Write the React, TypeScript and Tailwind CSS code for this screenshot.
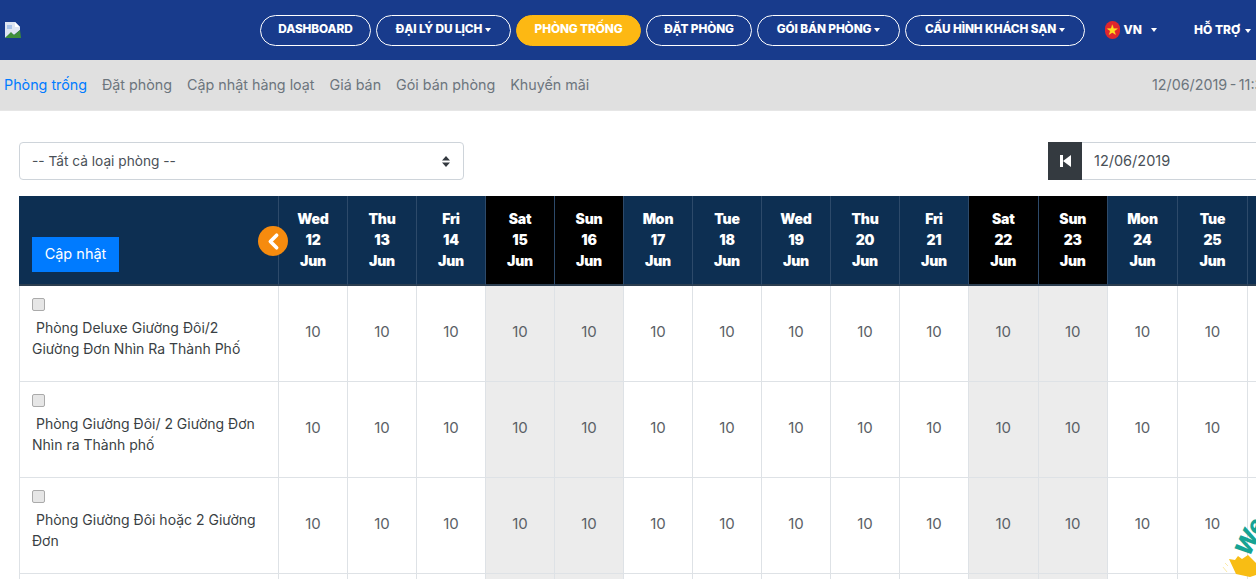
import { ChevronLeft } from "lucide-react";

const days = [
  ["Wed", "12"], ["Thu", "13"], ["Fri", "14"], ["Sat", "15"], ["Sun", "16"],
  ["Mon", "17"], ["Tue", "18"], ["Wed", "19"], ["Thu", "20"], ["Fri", "21"],
  ["Sat", "22"], ["Sun", "23"], ["Mon", "24"], ["Tue", "25"], ["Wed", "26"],
];

const rooms = [
  "Phòng Deluxe Giường Đôi/2 Giường Đơn Nhìn Ra Thành Phố",
  "Phòng Giường Đôi/ 2 Giường Đơn Nhìn ra Thành phố",
  "Phòng Giường Đôi hoặc 2 Giường Đơn",
  "",
];

const navItems = [
  { label: "DASHBOARD", width: "w-[111px]" },
  { label: "ĐẠI LÝ DU LỊCH", width: "w-[135px]", caret: true },
  { label: "PHÒNG TRỐNG", width: "w-[125px]", active: true },
  { label: "ĐẶT PHÒNG", width: "w-[106px]" },
  { label: "GÓI BÁN PHÒNG", width: "w-[143px]", caret: true },
  { label: "CẤU HÌNH KHÁCH SẠN", width: "w-[180px]", caret: true },
];

const subNav = ["Đặt phòng", "Cập nhật hàng loạt", "Giá bán", "Gói bán phòng", "Khuyến mãi"];

function Caret({ className = "" }: { className?: string }) {
  return <span className={`ml-[3px] inline-block border-x-[3.5px] border-t-[4px] border-x-transparent border-t-white align-middle ${className}`} />;
}

function BrokenImage() {
  return (
    <svg width="16" height="16" viewBox="0 0 16 16" className="shrink-0">
      <path d="M0 0h10l5 5v3L9 13l-3-2-6 5z" fill="#dfe6f2" />
      <path d="M10 0l5 5h-5z" fill="#fff" />
      <path d="M0 16l6-6 3 3 6-5 1 8z" fill="#3f8f3a" />
      <path d="M2 3h5v4H2z" fill="#a9c3e8" />
    </svg>
  );
}

function Flag() {
  return (
    <span className="flex size-[18px] items-center justify-center rounded-full bg-[#e0262c] text-[13px] leading-none text-[#ffdd1f]">
      ★
    </span>
  );
}

export default function App() {
  return (
    <div className="relative h-[579px] w-[1256px] overflow-hidden bg-white font-['Inter',sans-serif] text-[#212529]">
      <header className="flex h-[60px] items-center bg-[#183b8c] pl-[5px]">
        <BrokenImage />
        <nav className="ml-[239px] flex gap-[5px]">
          {navItems.map((item) => (
            <a
              key={item.label}
              className={`flex h-[31px] items-center justify-center whitespace-nowrap rounded-full border text-[11.8px] font-extrabold tracking-[-0.1px] text-white ${item.width} ${
                item.active ? "border-[#fdb813] bg-[#fdb813]" : "border-white"
              }`}
            >
              {item.label}
              {item.caret && <Caret />}
            </a>
          ))}
        </nav>
        <div className="ml-[20px] flex w-[52px] items-center gap-[4px] text-[12px] font-extrabold text-white">
          <Flag />
          VN
          <Caret className="ml-[5px]" />
        </div>
        <div className="ml-[37px] whitespace-nowrap text-[12px] font-extrabold text-white">
          HỖ TRỢ
          <Caret className="ml-[5px]" />
        </div>
      </header>

      <div className="flex h-[51px] items-center justify-between border-b border-[#e6e6e6] bg-[#e0e0e0] pl-[4px] text-[14.3px] text-[#6c757d]">
        <div className="flex gap-[15px]">
          <a className="text-[#007bff]">Phòng trống</a>
          {subNav.map((label) => (
            <a key={label}>{label}</a>
          ))}
        </div>
        <span className="w-[104px] overflow-hidden whitespace-nowrap [word-spacing:-1.5px]">12/06/2019 - 11:30</span>
      </div>

      <div className="w-[1300px] pl-[19px] pt-[31px]">
        <div className="flex items-center justify-between">
          <div className="flex h-[38px] w-[445px] items-center justify-between rounded-[4px] border border-[#ced4da] pl-[12px] pr-[13px] text-[13.7px] text-[#495057]">
            -- Tất cả loại phòng --
            <svg width="8" height="11" viewBox="0 0 8 11">
              <path d="M4 0l4 4.4H0zM4 11l4-4.4H0z" fill="#343a40" />
            </svg>
          </div>
          <div className="flex h-[38px] w-[252px]">
            <div className="flex w-[34px] items-center justify-center bg-[#343a40]">
              <svg width="11" height="12" viewBox="0 0 11 12">
                <path d="M0 0h3v12H0zM11 0v12L3 6z" fill="#fff" />
              </svg>
            </div>
            <div className="flex flex-1 items-center border-y border-[#ced4da] pl-[12px] text-[14.5px] text-[#495057]">12/06/2019</div>
          </div>
        </div>

        <div className="mt-[16px] grid grid-cols-[259px_repeat(10,69px)_69.5px_69.5px_70px_70px_69px]">
          <div className="relative flex h-[90px] items-end border-b-2 border-[#2c3e50] bg-[#0d2f52] pb-[12px] pl-[13px]">
            <button className="h-[35px] w-[87px] bg-[#007bff] pb-[2px] text-[14.5px] text-white">Cập nhật</button>
            <span className="absolute right-[-10px] top-[30px] z-10 flex size-[30px] items-center justify-center rounded-full bg-[#f68b0e]">
              <ChevronLeft className="size-[25px] text-white" strokeWidth={3.5} />
            </span>
          </div>
          {days.map(([name, day]) => (
            <div
              key={day}
              className={`flex h-[90px] flex-col items-center justify-center border-b-2 border-l border-b-[#2c3e50] border-l-[#2d4a6a] pb-[2px] text-[14px] font-black leading-[21px] tracking-[-0.2px] text-white ${
                name === "Sat" || name === "Sun" ? "bg-black" : "bg-[#0d2f52]"
              }`}
            >
              <span>{name}</span>
              <span>{day}</span>
              <span>Jun</span>
            </div>
          ))}

          {rooms.map((room, index) => (
            <Row key={index} room={room} />
          ))}
        </div>
      </div>

      <div className="absolute bottom-0 right-0 h-[62px] w-[34px] overflow-hidden">
        <span className="absolute left-[9px] top-[8px] -rotate-[65deg] text-[24px] font-extrabold italic leading-none text-[#16a394]">
          We
        </span>
        <svg width="34" height="26" viewBox="0 0 34 26" className="absolute left-0 top-[36px]">
          <path d="M1 14l4 5M3 10l3 3" stroke="#fbeaa8" strokeWidth="1" fill="none" />
          <path d="M7 6l6 1 3-4 4 3 6-4 8 8v12l-6 2-14-3z" fill="#f8bd14" />
        </svg>
      </div>
    </div>
  );
}

function Row({ room }: { room: string }) {
  return (
    <>
      <div className="h-[96px] border-b border-l border-[#dee2e6] pl-[12px] pr-[12px] pt-[12px] text-[14px] leading-[21px] text-[#3a3f44]">
        <input type="checkbox" className="block size-[13px] appearance-none rounded-[2px] border border-[#aaaaaa] bg-[#e6e6e6]" />
        <p className="mt-[6px]">&nbsp;{room}</p>
      </div>
      {days.map(([name, day]) => (
        <div
          key={day}
          className={`flex h-[96px] items-center justify-center border-b border-l border-[#dee2e6] pb-[2px] text-[15px] text-[#5a6066] ${
            name === "Sat" || name === "Sun" ? "bg-[#ececec]" : "bg-white"
          }`}
        >
          10
        </div>
      ))}
    </>
  );
}
